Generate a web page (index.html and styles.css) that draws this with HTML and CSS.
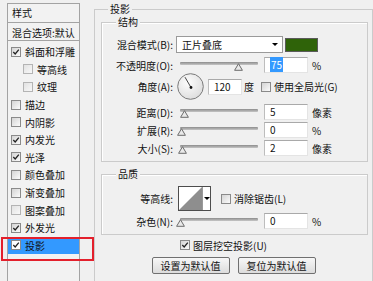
FILE: index.html
```html
<!DOCTYPE html>
<html lang="zh-CN">
<head>
<meta charset="utf-8">
<title>图层样式 - 投影</title>
<link rel="stylesheet" href="styles.css">
</head>
<body>
<div class="dialog">
  <aside class="styles-list">
    <div class="list-head">样式</div>
    <div class="list-blend">混合选项:默认</div>
    <ul class="fx-list">
      <li class="fx"><span class="cb"><svg width="8" height="8" viewBox="0 0 8 8"><path d="M1.3 4 L3.2 6 L6.8 1.6" fill="none" stroke="#222" stroke-width="1.3"/></svg></span><span>斜面和浮雕</span></li>
      <li class="fx sub"><span class="cb dim"></span><span>等高线</span></li>
      <li class="fx sub"><span class="cb dim"></span><span>纹理</span></li>
      <li class="fx"><span class="cb"></span><span>描边</span></li>
      <li class="fx"><span class="cb"></span><span>内阴影</span></li>
      <li class="fx"><span class="cb"><svg width="8" height="8" viewBox="0 0 8 8"><path d="M1.3 4 L3.2 6 L6.8 1.6" fill="none" stroke="#222" stroke-width="1.3"/></svg></span><span>内发光</span></li>
      <li class="fx"><span class="cb"><svg width="8" height="8" viewBox="0 0 8 8"><path d="M1.3 4 L3.2 6 L6.8 1.6" fill="none" stroke="#222" stroke-width="1.3"/></svg></span><span>光泽</span></li>
      <li class="fx"><span class="cb"></span><span>颜色叠加</span></li>
      <li class="fx"><span class="cb"></span><span>渐变叠加</span></li>
      <li class="fx"><span class="cb dim"></span><span>图案叠加</span></li>
      <li class="fx"><span class="cb"><svg width="8" height="8" viewBox="0 0 8 8"><path d="M1.3 4 L3.2 6 L6.8 1.6" fill="none" stroke="#222" stroke-width="1.3"/></svg></span><span>外发光</span></li>
      <li class="fx sel"><span class="cb white"><svg width="8" height="8" viewBox="0 0 8 8"><path d="M1.3 4 L3.2 6 L6.8 1.6" fill="none" stroke="#222" stroke-width="1.3"/></svg></span><span>投影</span></li>
    </ul>
  </aside>

  <section class="panel">
    <div class="legend">投影</div>

    <div class="group struct">
      <div class="legend">结构</div>

      <div class="row r1">
        <span class="lbl">混合模式(B):</span>
        <div class="select"><span>正片叠底</span><i class="arrow"></i></div>
        <div class="swatch"></div>
      </div>

      <div class="row r2">
        <span class="lbl">不透明度(O):</span>
        <div class="slider"><div class="track"></div><svg class="thumb" style="left:calc(75% - 5px)" width="9" height="8" viewBox="0 0 9 8"><path d="M4.5 0.7 L8.4 7.3 L0.6 7.3 Z" fill="#e9e9e9" stroke="#6b6b6b"/></svg></div>
        <div class="num"><span class="hl">75</span></div>
        <span class="unit">%</span>
      </div>

      <div class="row r3">
        <span class="lbl">角度(A):</span>
        <svg class="dial" width="27" height="27" viewBox="0 0 27 27">
          <defs><radialGradient id="dg" cx="40%" cy="35%" r="70%"><stop offset="0" stop-color="#fdfdfd"/><stop offset="1" stop-color="#dcdcdc"/></radialGradient></defs>
          <circle cx="13.5" cy="13.5" r="12.8" fill="url(#dg)" stroke="#7a7a7a"/>
          <line x1="14" y1="14.5" x2="8" y2="4.2" stroke="#444"/>
          <circle cx="14" cy="14.5" r="1.4" fill="#111"/>
        </svg>
        <div class="num angle">120</div>
        <span class="unit deg">度</span>
        <span class="cb gl"></span>
        <span class="cblbl">使用全局光(G)</span>
      </div>

      <div class="row r4">
        <span class="lbl">距离(D):</span>
        <div class="slider"><div class="track"></div><svg class="thumb" style="left:-0.5px" width="9" height="8" viewBox="0 0 9 8"><path d="M4.5 0.7 L8.4 7.3 L0.6 7.3 Z" fill="#e9e9e9" stroke="#6b6b6b"/></svg></div>
        <div class="num">5</div>
        <span class="unit">像素</span>
      </div>

      <div class="row r5">
        <span class="lbl">扩展(R):</span>
        <div class="slider"><div class="track"></div><svg class="thumb" style="left:-3.5px" width="9" height="8" viewBox="0 0 9 8"><path d="M4.5 0.7 L8.4 7.3 L0.6 7.3 Z" fill="#e9e9e9" stroke="#6b6b6b"/></svg></div>
        <div class="num">0</div>
        <span class="unit">%</span>
      </div>

      <div class="row r5">
        <span class="lbl">大小(S):</span>
        <div class="slider"><div class="track"></div><svg class="thumb" style="left:-2.5px" width="9" height="8" viewBox="0 0 9 8"><path d="M4.5 0.7 L8.4 7.3 L0.6 7.3 Z" fill="#e9e9e9" stroke="#6b6b6b"/></svg></div>
        <div class="num">2</div>
        <span class="unit">像素</span>
      </div>
    </div>

    <div class="group quality">
      <div class="legend">品质</div>

      <div class="row q1">
        <span class="lbl">等高线:</span>
        <div class="contour">
          <svg class="cpreview" width="23" height="23" viewBox="0 0 23 23"><rect width="23" height="23" fill="#fff"/><polygon points="0,23 23,0 23,23" fill="#8e8e8e"/></svg>
          <div class="cdrop"><i class="arrow"></i></div>
        </div>
        <span class="cb aa"></span>
        <span class="cblbl">消除锯齿(L)</span>
      </div>

      <div class="row q2">
        <span class="lbl">杂色(N):</span>
        <div class="slider"><div class="track"></div><svg class="thumb" style="left:-4px" width="9" height="8" viewBox="0 0 9 8"><path d="M4.5 0.7 L8.4 7.3 L0.6 7.3 Z" fill="#e9e9e9" stroke="#6b6b6b"/></svg></div>
        <div class="num">0</div>
        <span class="unit">%</span>
      </div>
    </div>

    <div class="knock">
      <span class="cb"><svg width="8" height="8" viewBox="0 0 8 8"><path d="M1.3 4 L3.2 6 L6.8 1.6" fill="none" stroke="#222" stroke-width="1.3"/></svg></span>
      <span class="cblbl">图层挖空投影(U)</span>
    </div>

    <div class="buttons">
      <button class="btn">设置为默认值</button>
      <button class="btn">复位为默认值</button>
    </div>
  </section>
</div>
<div class="annot"></div>
</body>
</html>
```

FILE: styles.css
```css
* { box-sizing: border-box; }
html, body { margin: 0; padding: 0; }
body {
  width: 373px;
  height: 281px;
  overflow: hidden;
  position: relative;
  background: #f0f0f0;
  font-family: "Noto Sans CJK SC", "Noto Sans", sans-serif;
  font-size: 10px;
  color: #111;
}
.dialog { display: flex; align-items: flex-start; height: 281px; overflow: hidden; }

/* left list */
.styles-list {
  flex: none;
  margin: 3px 0 0 7px;
  width: 73px;
  height: 278px;
  border: 1px solid #a3a3a3;
  border-bottom: none;
  background: #f2f2f2;
}
.list-head {
  height: 19px;
  line-height: 18px;
  padding-left: 4px;
  border-bottom: 1px solid #a3a3a3;
}
.list-blend {
  height: 18px;
  padding: 2px 0 0 4px;
  line-height: 15px;
  border-bottom: 1px solid #a3a3a3;
  white-space: nowrap;
  overflow: hidden;
}
.fx-list { list-style: none; margin: 0; padding: 2px 0 0 0; }
.fx {
  height: 17.6px;
  display: flex;
  align-items: center;
  padding-left: 3px;
  white-space: nowrap;
}
.fx.sub { padding-left: 15px; }
.fx .cb { margin-right: 4px; }
.fx.sel { background: #3399ff; }

/* checkbox */
.cb {
  flex: none;
  width: 10px;
  height: 10px;
  border: 1px solid #8a8a8a;
  background: linear-gradient(135deg, #d4d4d4, #fbfbfb);
  display: inline-flex;
  align-items: center;
  justify-content: center;
}
.cb.dim { border-color: #b4b4b4; background: linear-gradient(135deg, #e2e2e2, #f8f8f8); }
.cb.white { background: #fff; }
.cb svg { display: block; }

/* right panel */
.panel {
  flex: none;
  margin: 9px 0 0 14px;
  width: 279px;
  height: 272px;
  border: 1px solid #cbcbcb;
  border-bottom: none;
}
.legend {
  width: max-content;
  margin: -8px 0 0 13px;
  padding: 0 2px;
  line-height: 14px;
  background: #f0f0f0;
}
.group {
  border: 1px solid #cbcbcb;
  box-shadow: inset 1px 1px 0 #fff;
  margin: 6px 4px 0 6px;
}
.group > .legend { margin-left: 14px; }
.struct { height: 140px; }
.quality { height: 61px; margin-top: 12px; }

.row { display: flex; align-items: center; height: 16px; white-space: nowrap; }
.lbl { flex: none; width: 71px; text-align: right; }

.r1 { margin-top: 7px; height: 17px; }
.r2 { margin-top: 4px; }
.r3 { margin-top: 0; height: 27px; }
.r4 { margin-top: 4px; }
.r5 { margin-top: 2px; }

.select {
  flex: none;
  margin-left: 3px;
  width: 107px;
  height: 17px;
  border: 1px solid #9a9a9a;
  background: #fff;
  display: flex;
  align-items: center;
  justify-content: space-between;
  padding: 0 4px 0 5px;
}
.arrow {
  display: block;
  width: 0;
  height: 0;
  border-left: 3px solid transparent;
  border-right: 3px solid transparent;
  border-top: 3px solid #000;
}
.swatch {
  flex: none;
  margin-left: 2px;
  width: 33px;
  height: 14px;
  background: #2f6309;
  border: 1px solid #5a5a5a;
}

.slider {
  flex: none;
  position: relative;
  margin-left: 7px;
  width: 78px;
  height: 16px;
}
.track {
  height: 3px;
  margin-top: 5px;
  border-radius: 1px;
  background: linear-gradient(#8c8c8c, #c6c6c6);
}
.thumb { position: absolute; top: 6px; display: block; }

.num {
  flex: none;
  margin-left: 6px;
  width: 44px;
  height: 16px;
  line-height: 14px;
  padding-left: 5px;
  background: #fff;
  border-top: 1px solid #a9a9a9;
  border-left: 1px solid #bdbdbd;
  border-right: 1px solid #e4e4e4;
  border-bottom: 1px solid #e4e4e4;
}
.hl { background: #3399ff; color: #fff; padding: 0 1px; }
.unit { margin-left: 4px; }

.dial { flex: none; margin-left: 4px; display: block; }
.num.angle { margin-left: 4px; width: 34px; }
.unit.deg { margin-left: 2px; }
.cb.gl { margin-left: 7px; }
.cblbl { margin-left: 3px; }

.q1 { margin-top: 5px; height: 25px; }
.q2 { margin-top: 2px; }
.contour {
  flex: none;
  margin-left: 5px;
  width: 33px;
  height: 25px;
  border: 1px solid #4d4d4d;
  display: flex;
  background: #fff;
}
.cpreview { display: block; flex: none; }
.cdrop {
  flex: 1;
  border-left: 1px solid #9a9a9a;
  display: flex;
  align-items: center;
  justify-content: center;
}
.cb.aa { margin-left: 10px; }

.knock {
  display: flex;
  align-items: center;
  height: 10px;
  margin-top: 5px;
  padding-left: 85px;
}
.buttons {
  display: flex;
  justify-content: center;
  gap: 8px;
  margin-top: 7px;
}
.btn {
  width: 78px;
  height: 17px;
  padding: 0;
  border: 1px solid #707070;
  border-radius: 2px;
  background: linear-gradient(#f7f7f7, #dcdcdc);
  font-family: inherit;
  font-size: 10px;
  line-height: 15px;
  color: #111;
}

/* red annotation frame */
.annot {
  position: absolute;
  left: 1px;
  top: 237px;
  width: 93px;
  height: 24px;
  border: 2px solid #e3202c;
}
```
